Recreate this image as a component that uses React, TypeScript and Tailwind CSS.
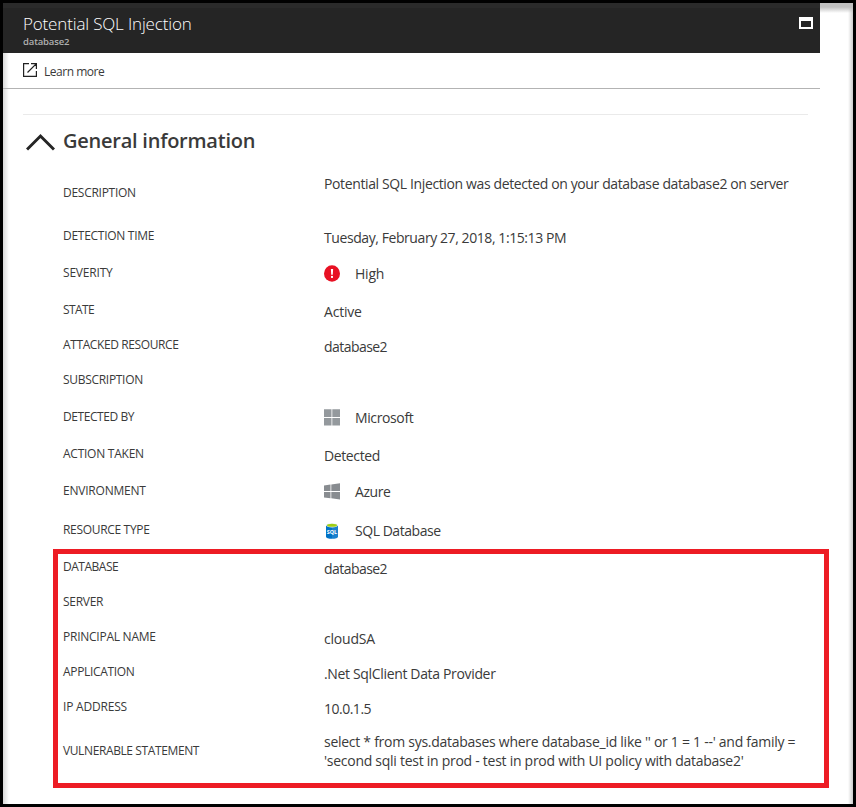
import type { ReactNode } from 'react';

type Row = {
  label: string;
  track: string;
  height: string;
  value?: string[];
  valueTrack?: string;
  icon?: ReactNode;
  tall?: boolean;
};

const SeverityIcon = () => (
  <svg width="16" height="17" viewBox="0 0 16 17" className="mt-px block shrink-0">
    <ellipse cx="8" cy="8.5" rx="8" ry="8.3" fill="#e81123" />
    <path d="M6.9 4h2.2l-.3 5.8H7.2z" fill="#fff" />
    <rect x="7" y="10.9" width="2" height="2" fill="#fff" />
  </svg>
);

const MicrosoftIcon = () => (
  <svg width="16" height="17" viewBox="0 0 16 17" className="mt-px block shrink-0">
    <path d="M0 .3h7.5V8H0zM8.3.3H16V8H8.3zM0 9h7.5v7.6H0zM8.3 9H16v7.6H8.3z" fill="#94999d" />
  </svg>
);

const AzureIcon = () => (
  <svg width="16" height="17" viewBox="0 0 16 17" className="mt-px block shrink-0">
    <path d="M0 2.4l6.5-.9V8H0zM7.3 1.4L16 .2V8H7.3zM0 8.9h6.5v6.4L0 14.4zM7.3 8.9H16v7.6l-8.7-1.2z" fill="#888c90" />
  </svg>
);

const SqlIcon = () => (
  <svg width="16" height="16" viewBox="0 0 16 16" className="mt-0.5 block shrink-0">
    <path d="M2 2.3v11.4c0 1.2 2.7 2.1 6 2.1V2.3z" fill="#0072c6" />
    <path d="M8 2.3v13.5c3.3 0 6-.9 6-2.1V2.3z" fill="#1b80cd" />
    <ellipse cx="8" cy="2.3" rx="6" ry="2.1" fill="#e8f2f8" />
    <ellipse cx="8" cy="2.2" rx="5" ry="1.5" fill="#9fce12" />
    <text x="8" y="11" textAnchor="middle" fontSize="5.4" fontWeight="700" fill="#fff" fontFamily="Open Sans, sans-serif">SQL</text>
  </svg>
);

const rows: Row[] = [
  { label: 'DESCRIPTION', track: 'tracking-[-0.27px]', height: 'h-[52px]', tall: true, value: ['Potential SQL Injection was detected on your database database2 on server'], valueTrack: 'tracking-[-0.375px]' },
  { label: 'DETECTION TIME', track: 'tracking-[-0.28px]', height: 'h-[37px]', value: ['Tuesday, February 27, 2018, 1:15:13 PM'], valueTrack: 'tracking-[-0.42px]' },
  { label: 'SEVERITY', track: 'tracking-[-0.2px]', height: 'h-[37px]', value: ['High'], valueTrack: 'tracking-[-0.2px]', icon: <SeverityIcon /> },
  { label: 'STATE', track: 'tracking-[-0.6px]', height: 'h-[35px]', value: ['Active'], valueTrack: 'tracking-[-0.2px]' },
  { label: 'ATTACKED RESOURCE', track: 'tracking-[-0.39px]', height: 'h-[35px]', value: ['database2'], valueTrack: 'tracking-[-0.55px]' },
  { label: 'SUBSCRIPTION', track: 'tracking-[-0.3px]', height: 'h-[37px]' },
  { label: 'DETECTED BY', track: 'tracking-[-0.42px]', height: 'h-[37px]', value: ['Microsoft'], valueTrack: 'tracking-[-0.38px]', icon: <MicrosoftIcon /> },
  { label: 'ACTION TAKEN', track: 'tracking-[-0.25px]', height: 'h-[37px]', value: ['Detected'], valueTrack: 'tracking-[-0.38px]' },
  { label: 'ENVIRONMENT', track: 'tracking-[-0.22px]', height: 'h-[39px]', value: ['Azure'], valueTrack: 'tracking-[-0.45px]', icon: <AzureIcon /> },
  { label: 'RESOURCE TYPE', track: 'tracking-[-0.32px]', height: 'h-[37px]', value: ['SQL Database'], valueTrack: 'tracking-[-0.46px]', icon: <SqlIcon /> },
  { label: 'DATABASE', track: 'tracking-[-0.48px]', height: 'h-[35px]', value: ['database2'], valueTrack: 'tracking-[-0.55px]' },
  { label: 'SERVER', track: 'tracking-[-0.28px]', height: 'h-[35px]' },
  { label: 'PRINCIPAL NAME', track: 'tracking-[-0.25px]', height: 'h-[35px]', value: ['cloudSA'], valueTrack: 'tracking-[-0.2px]' },
  { label: 'APPLICATION', track: 'tracking-[-0.34px]', height: 'h-[35px]', value: ['.Net SqlClient Data Provider'], valueTrack: 'tracking-[-0.34px]' },
  { label: 'IP ADDRESS', track: 'tracking-[-0.2px]', height: 'h-[35px]', value: ['10.0.1.5'], valueTrack: 'tracking-[-0.5px]' },
  {
    label: 'VULNERABLE STATEMENT',
    track: 'tracking-[-0.39px]',
    height: 'h-[43px]',
    tall: true,
    value: [
      "select * from sys.databases where database_id like '' or 1 = 1 --' and family =",
      "'second sqli test in prod - test in prod with UI policy with database2'",
    ],
    valueTrack: 'tracking-[-0.27px]',
  },
];

function InfoRow({ row }: { row: Row }) {
  const valuePad = row.tall ? '' : row.icon ? 'pt-px' : 'pt-0.5';
  return (
    <div className={`flex ${row.height}`}>
      <dt className={`w-[261px] text-xs leading-5 ${row.track} ${row.tall ? 'pt-[9px]' : ''}`}>{row.label}</dt>
      <dd className={`flex items-start gap-[15px] text-sm leading-[19px] whitespace-nowrap ${valuePad}`}>
        {row.icon}
        <div className={row.valueTrack}>
          {row.value?.map((line) => <p key={line}>{line}</p>)}
        </div>
      </dd>
    </div>
  );
}

export default function App() {
  return (
    <main className="relative h-[807px] w-[856px] overflow-hidden border-[3px] border-black bg-white font-['Open_Sans','Noto_Sans',sans-serif] text-[#3a3a3a]">
      <div className="absolute inset-y-0 left-0 w-1.5 bg-linear-to-r from-black/15 to-transparent" />
      <div className="absolute inset-y-0 right-0 w-[5px] bg-linear-to-l from-black/20 to-transparent" />
      <div className="absolute inset-x-0 top-0 h-2.5 bg-linear-to-b from-[#bfbfbf] from-40% to-transparent" />

      <header className="relative flex h-[50px] w-[817px] items-start justify-between border-t-[5px] border-[#2a2a2a] bg-[#252525] pr-[7px] pl-5">
        <div>
          <h1 className="pt-1 text-[17px] leading-6 font-light tracking-[-0.16px] text-white">Potential SQL Injection</h1>
          <p className="text-[9.5px] leading-3 font-semibold tracking-[-0.15px] text-[#b0b0b0]">database2</p>
        </div>
        <div className="mt-[9px] h-3 w-3.5 border-2 border-t-4 border-white" />
      </header>

      <div className="relative flex h-9 w-[817px] items-start gap-[7px] border-b border-[#b3b3b3] pl-5">
        <svg width="14" height="14" viewBox="0 0 14 14" fill="none" stroke="#222" strokeWidth="1.2" className="mt-[10px]">
          <path d="M6 .6H.6v12.8h12.8V8M8 .6h5.4V6M13.4.6L4.5 9.5" />
        </svg>
        <a className="pt-[9px] text-xs leading-5 tracking-[-0.48px]">Learn more</a>
      </div>

      <section className="relative pt-[25px]">
        <div className="mr-[45px] ml-5 h-px bg-[#eaeaea]" />
        <div className="flex h-[52px] items-center gap-2 pl-[23px]">
          <svg width="29" height="18" viewBox="0 0 29 18" fill="none" stroke="#252525" strokeWidth="3" className="mt-0.5">
            <path d="M1 16.5L14.5 3 28 16.5" />
          </svg>
          <h2 className="text-[20px] leading-7 font-semibold tracking-[-0.24px] text-[#3a3a3a]">General information</h2>
        </div>
        <dl className="pt-[7px] pl-[60px]">
          {rows.map((row) => <InfoRow key={row.label} row={row} />)}
        </dl>
      </section>

      <div className="absolute top-[546px] left-[50px] h-[239px] w-[776px] border-[5px] border-[#ed1c24]" />
    </main>
  );
}
